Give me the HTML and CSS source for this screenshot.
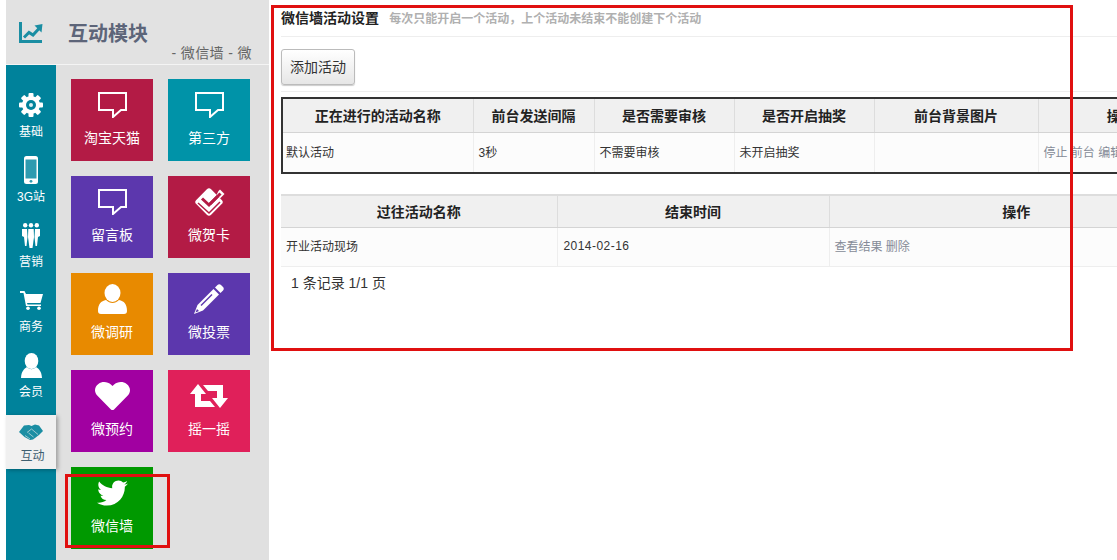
FILE: index.html
```html
<!DOCTYPE html>
<html lang="zh-CN">
<head>
  <meta charset="UTF-8" />
  <title>微信墙活动设置</title>
  <link rel="stylesheet" href="styles.css">
</head>
<body>

  <div class="side">
    <div class="side-head">
      <div class="head-icon">
        <svg width="24" height="21" viewBox="0 0 24 21"><path d="M1.500 0V19.500H23" fill="none" stroke="#1b8ea3" stroke-width="3"/><path d="M5 15.500L10 10.500L14 13L20 6.500" fill="none" stroke="#1b8ea3" stroke-width="3"/><path d="M15.500 3.500L23.500 2L22.500 10.500Z" fill="#1b8ea3"/></svg>
      </div>
      <div class="head-text">
        <h1>互动模块</h1>
        <p>- 微信墙 - 微</p>
      </div>
    </div>

    <div class="side-body">
      <div class="rail">
        <a class="rail-item">
          <span class="rail-icon">
            <svg width="24" height="24" viewBox="0 0 24 24"><g fill="#fff"><rect x="9.500" y="0" width="5" height="24" rx="1"/><rect x="9.500" y="0" width="5" height="24" rx="1" transform="rotate(45 12 12)"/><rect x="9.500" y="0" width="5" height="24" rx="1" transform="rotate(90 12 12)"/><rect x="9.500" y="0" width="5" height="24" rx="1" transform="rotate(135 12 12)"/></g><circle cx="12" cy="12" r="7" fill="none" stroke="#fff" stroke-width="4"/><circle cx="12" cy="12" r="5" fill="#00829b"/><circle cx="12" cy="12" r="2" fill="#d8eef2"/></svg>
          </span>
          <span>基础</span>
        </a>
        <a class="rail-item">
          <span class="rail-icon">
            <svg width="14" height="28" viewBox="0 0 14 28"><rect width="14" height="28" rx="2.500" fill="#fff"/><rect x="1.500" y="3.500" width="11" height="19" fill="#2e9bb0"/><circle cx="7" cy="25.300" r="1.400" fill="#2e9bb0"/></svg>
          </span>
          <span>3G站</span>
        </a>
        <a class="rail-item">
          <span class="rail-icon">
            <svg width="18" height="25" viewBox="0 0 18 25" fill="#fff"><circle cx="3.200" cy="2.200" r="2.200"/><circle cx="9" cy="2.200" r="2.200"/><circle cx="14.800" cy="2.200" r="2.200"/><path d="M0 6H5L5.500 14L4.500 23H3L2 14L0 13Z"/><path d="M13 6H18V13L16 14L15 23H13.500L12.500 14Z"/><path d="M6.300 6H11.700L12 14L10.500 25H7.500L6 14Z"/></svg>
          </span>
          <span>营销</span>
        </a>
        <a class="rail-item">
          <span class="rail-icon">
            <svg width="23" height="19" viewBox="0 0 23 19" fill="#fff"><path d="M0 0H4.500L6 3H23L20.500 12H7L7.500 13.500H21V15H6L3.500 2H0Z"/><circle cx="8" cy="17.200" r="1.800"/><circle cx="19" cy="17.200" r="1.800"/></svg>
          </span>
          <span>商务</span>
        </a>
        <a class="rail-item">
          <span class="rail-icon">
            <svg width="21" height="25" viewBox="0 0 21 25" fill="#fff"><ellipse cx="10.500" cy="8" rx="6.800" ry="8"/><path d="M6 14C3 16 .5 18 0 25H21C20.500 18 18 16 15 14C12 17 9 17 6 14Z"/></svg>
          </span>
          <span>会员</span>
        </a>
        <a class="rail-item rail-active">
          <span class="rail-icon">
            <svg width="24" height="16" viewBox="0 0 24 16"><path d="M0 8L5 1.500L10 1L12.500 2L16 .500L20 1.500L24 7L20 11L14 15.500L11 16L5.500 13Z" fill="#1b8ea3"/><path d="M8 8.500L12.500 5L19 10.500M6 11.500L11 15M9.500 9L14.500 13" fill="none" stroke="#f0f0f0" stroke-width=".6"/></svg>
          </span>
          <span>互动</span>
        </a>
      </div>

      <div class="tiles">
        <a class="tile tile-red">
          <span class="tile-icon"><svg width="29" height="26" viewBox="0 0 29 26"><path d="M1 1H28V18H23L15 25V18H1Z" fill="none" stroke="#fff" stroke-width="2"/></svg></span>
          <span>淘宝天猫</span>
        </a>
        <a class="tile tile-teal">
          <span class="tile-icon"><svg width="29" height="26" viewBox="0 0 29 26"><path d="M1 1H28V18H23L15 25V18H1Z" fill="none" stroke="#fff" stroke-width="2"/></svg></span>
          <span>第三方</span>
        </a>
        <a class="tile tile-purple">
          <span class="tile-icon"><svg width="29" height="26" viewBox="0 0 29 26"><path d="M1 1H28V18H23L15 25V18H1Z" fill="none" stroke="#fff" stroke-width="2"/></svg></span>
          <span>留言板</span>
        </a>
        <a class="tile tile-red">
          <span class="tile-icon">
            <svg width="32" height="30" viewBox="0 0 32 30"><rect x="5.500" y="4.500" width="21" height="21" rx="3" fill="#fff" transform="rotate(45 16 15)"/><path d="M9 11.500L16 18L29 5" fill="none" stroke="#b31b45" stroke-width="3"/><path d="M5 16L16 26L27 15" fill="none" stroke="#b31b45" stroke-width="1.500"/><path d="M25.500 4L27 2.500L31.500 7L27 11.500L23.500 8Z" fill="#fff"/><path d="M17 17L27.500 6.500" stroke="#b31b45" stroke-width="3"/></svg>
          </span>
          <span>微贺卡</span>
        </a>
        <a class="tile tile-orange">
          <span class="tile-icon">
            <svg width="29" height="30" viewBox="0 0 29 30" fill="#fff"><ellipse cx="14.500" cy="9" rx="8" ry="9"/><path d="M8 16C3 17 0 20 0 27C0 29 1 30 3 30H26C28 30 29 29 29 27C29 20 26 17 21 16C17 20 12 20 8 16Z"/></svg>
          </span>
          <span>微调研</span>
        </a>
        <a class="tile tile-purple">
          <span class="tile-icon">
            <svg width="30" height="30" viewBox="0 0 30 30" fill="#fff"><path d="M21 3.500L23.500 1C24.500 0 26 0 27 1L29 3C30 4 30 5.500 29 6.500L26.500 9Z"/><path d="M19.500 5L25 10.500L9 26.500L0 30L3.500 21Z"/><path d="M18 10.500L7 21.500" stroke="#5c37ad" stroke-width="1.500"/><path d="M3 25L5 27L1.500 28.500Z" fill="#5c37ad"/></svg>
          </span>
          <span>微投票</span>
        </a>
        <a class="tile tile-magenta">
          <span class="tile-icon">
            <svg width="35" height="28" viewBox="0 0 512 480" preserveAspectRatio="none"><path fill="#fff" d="M462.3 32.600C407.500 -14.100 326 -5.700 275.700 46.200L256 66.500l-19.700-20.300C186.100 -5.700 104.500 -14.100 49.700 32.600c-62.800 53.600-66.100 149.800-9.900 207.900l193.500 229.800c12.500 12.900 32.800 12.900 45.300 0l193.500-229.800c56.300-58.100 53-154.300-9.800-207.900z"/></svg>
          </span>
          <span>微预约</span>
        </a>
        <a class="tile tile-pink">
          <span class="tile-icon">
            <svg width="38" height="24" viewBox="0 0 38 24" fill="#fff"><path d="M8 0L16 10H11V17H20L25 23H5V10H0Z"/><path d="M30 24L22 14H27V7H18L13 1H33V14H38Z"/></svg>
          </span>
          <span>摇一摇</span>
        </a>
        <a class="tile tile-green">
          <span class="tile-icon">
            <svg width="31" height="26" viewBox="0 0 512 416"><path transform="translate(0 -48)" fill="#fff" d="M459.370 151.716c.325 4.548.325 9.097.325 13.645 0 138.720-105.583 298.558-298.558 298.558-59.452 0-114.680-17.219-161.137-47.106 8.447.974 16.568 1.299 25.340 1.299 49.055 0 94.213-16.568 130.274-44.832-46.132-.975-84.792-31.188-98.112-72.772 6.498.974 12.995 1.624 19.818 1.624 9.421 0 18.843-1.300 27.614-3.573-48.081-9.747-84.143-51.980-84.143-102.985v-1.299c13.969 7.797 30.214 12.670 47.431 13.319-28.264-18.843-46.781-51.005-46.781-87.391 0-19.492 5.197-37.360 14.294-52.954 51.655 63.675 129.300 105.258 216.365 109.807-1.624-7.797-2.599-15.918-2.599-24.040 0-57.828 46.782-104.934 104.934-104.934 30.213 0 57.502 12.670 76.670 33.137 23.715-4.548 46.456-13.320 66.599-25.340-7.798 24.366-24.366 44.833-46.132 57.827 21.117-2.273 41.584-8.122 60.426-16.243-14.292 20.791-32.161 39.308-52.628 54.253z"/></svg>
          </span>
          <span>微信墙</span>
        </a>
      </div>
    </div>
  </div>

  <div class="main">
    <div class="title-row">
      <strong class="title">微信墙活动设置</strong>
      <span class="hint">每次只能开启一个活动，上个活动未结束不能创建下个活动</span>
    </div>

    <div class="toolbar">
      <button class="btn" type="button">添加活动</button>
    </div>

    <table class="grid grid-current">
      <colgroup>
        <col class="c-name"><col class="c-gap"><col class="c-check"><col class="c-check"><col class="c-bg"><col class="c-op">
      </colgroup>
      <thead>
        <tr>
          <th>正在进行的活动名称</th>
          <th>前台发送间隔</th>
          <th>是否需要审核</th>
          <th>是否开启抽奖</th>
          <th>前台背景图片</th>
          <th>操作</th>
        </tr>
      </thead>
      <tbody>
        <tr>
          <td>默认活动</td>
          <td>3秒</td>
          <td>不需要审核</td>
          <td>未开启抽奖</td>
          <td></td>
          <td><a class="link">停止</a> <a class="link">前台</a> <a class="link">编辑</a> <a class="link">删除</a></td>
        </tr>
      </tbody>
    </table>

    <table class="grid grid-past">
      <colgroup>
        <col class="c-pname"><col class="c-date"><col class="c-pop">
      </colgroup>
      <thead>
        <tr>
          <th>过往活动名称</th>
          <th>结束时间</th>
          <th>操作</th>
        </tr>
      </thead>
      <tbody>
        <tr>
          <td>开业活动现场</td>
          <td class="date">2014-02-16</td>
          <td><a class="link">查看结果</a> <a class="link">删除</a></td>
        </tr>
      </tbody>
    </table>

    <div class="pager">1 条记录 1/1 页</div>
  </div>

  <!-- annotation boxes drawn over the screenshot -->
  <div class="mark mark-main"></div>
  <div class="mark mark-tile"></div>

</body>
</html>
```

FILE: styles.css
```css
html, body {
  height: 100%;
}

body {
  margin: 0;
  display: flex;
  overflow: hidden;
  background: #ffffff;
  font-family: "Liberation Sans", "Noto Sans CJK SC", sans-serif;
  font-size: 12px;
  color: #333;
}

a {
  color: inherit;
  text-decoration: none;
}

/* left column */
.side {
  flex: 0 0 263px;
  margin-left: 6px;
  background: #e0e0e0;
  display: flex;
  flex-direction: column;
}

.side-head {
  flex: 0 0 64px;
  display: flex;
  border-bottom: 1px solid #f4f4f4;
  background: #e2e2e2;
}

.head-icon {
  flex: 0 0 50px;
  display: flex;
  justify-content: center;
  padding-top: 22px;
}

.head-text {
  flex: 1;
  padding: 23px 17px 0 12px;
}

.head-text h1 {
  margin: 0;
  font-size: 20px;
  line-height: 22px;
  font-weight: bold;
  color: #5d6579;
}

.head-text p {
  margin: 0;
  font-size: 14px;
  line-height: 16px;
  letter-spacing: 0.4px;
  color: #666;
  text-align: right;
}

.side-body {
  flex: 1;
  display: flex;
  min-height: 0;
}

.rail {
  flex: 0 0 50px;
  background: #00829b;
  padding-top: 20px;
  box-sizing: border-box;
}

.rail-item {
  height: 65px;
  display: flex;
  flex-direction: column;
  align-items: center;
  color: #fff;
  line-height: 14px;
}

.rail-icon {
  flex: 0 0 40px;
  display: flex;
  align-items: center;
  justify-content: center;
}

.rail-active {
  height: 54px;
  margin-top: 5px;
  background: #f0f0f0;
  color: #3f5f70;
  box-shadow: 2px 1px 4px rgba(0, 0, 0, 0.3);
  position: relative;
}

.rail-active .rail-icon {
  flex-basis: 34px;
}

.rail-active span:last-child {
  margin-left: 3px;
}

.tiles {
  flex: 1;
  display: grid;
  grid-template-columns: 82px 82px;
  grid-auto-rows: 82px;
  gap: 15px;
  padding: 14px 0 0 15px;
}

.tile {
  display: flex;
  flex-direction: column;
  align-items: center;
  color: #fff;
  font-size: 14px;
  line-height: 14px;
}

.tile-icon {
  flex: 0 0 52px;
  display: flex;
  align-items: center;
  justify-content: center;
}

.tile-red { background: #b31b45; }
.tile-teal { background: #0093a8; }
.tile-purple { background: #5c37ad; }
.tile-orange { background: #e88a00; }
.tile-magenta { background: #a100a1; }
.tile-pink { background: #e0205a; }
.tile-green { background: #009900; }

/* right column */
.main {
  flex: 1;
  min-width: 0;
  padding-left: 12px;
  overflow: hidden;
}

.title-row {
  height: 36px;
  line-height: 36px;
  border-bottom: 1px solid #eeeeee;
  white-space: nowrap;
}

.title {
  font-size: 14px;
  color: #222;
}

.hint {
  margin-left: 7px;
  font-weight: bold;
  color: #b0b0b0;
}

.toolbar {
  height: 55px;
  box-sizing: border-box;
  padding-top: 12px;
  border-bottom: 1px solid #eeeeee;
}

.btn {
  width: 74px;
  height: 36px;
  padding: 0 0 2px;
  border: 1px solid #bbbbbb;
  border-radius: 3px;
  background: linear-gradient(#ffffff, #e6e6e6);
  box-shadow: 0 1px 1px rgba(0, 0, 0, 0.2);
  font-family: inherit;
  font-size: 14px;
  color: #333;
}

.grid {
  table-layout: fixed;
  border-collapse: collapse;
  width: 922px;
}

.grid th {
  height: 32px;
  padding: 0;
  background: #f0f0f0;
  border-left: 1px solid #dddddd;
  border-bottom: 1px solid #d4d4d4;
  font-size: 14px;
  color: #222;
  text-align: center;
}

.grid td {
  padding: 0 5px;
  background: #fcfcfc;
  border-left: 1px solid #eeeeee;
  white-space: nowrap;
}

.grid th:first-child,
.grid td:first-child {
  border-left: 0;
}

.link {
  color: #858b97;
}

.grid-current {
  margin-top: 5px;
  outline: 2px solid #333333;
  outline-offset: -2px;
}

.grid-current th {
  height: 31px;
  padding-bottom: 2px;
  border-top: 2px solid #333333;
}

.grid-current th:first-child {
  padding-left: 2px;
}

.grid-current td {
  height: 37px;
  padding-bottom: 2px;
  border-bottom: 2px solid #333333;
}

.c-name { width: 192px; }
.c-gap { width: 121px; }
.c-check { width: 140px; }
.c-bg { width: 164px; }
.c-op { width: 165px; }

.grid-past {
  margin-top: 20px;
  border-top: 2px solid #dddddd;
}

.grid-past th {
  height: 29px;
  padding-bottom: 2px;
}

.grid-past td {
  height: 35px;
  padding-bottom: 3px;
  border-bottom: 1px solid #eeeeee;
}

.c-pname { width: 276px; }
.c-date { width: 272px; }
.c-pop { width: 374px; }

.grid-past td.date {
  padding-left: 6px;
  letter-spacing: 0.45px;
}

.pager {
  padding-left: 10px;
  font-size: 14px;
  line-height: 32px;
  color: #333;
}

/* red boxes */
.mark {
  position: absolute;
  box-sizing: border-box;
  border: 3px solid #e01010;
}

.mark-main {
  left: 271px;
  top: 5px;
  width: 802px;
  height: 346px;
}

.mark-tile {
  left: 65px;
  top: 474px;
  width: 105px;
  height: 74px;
}
```
